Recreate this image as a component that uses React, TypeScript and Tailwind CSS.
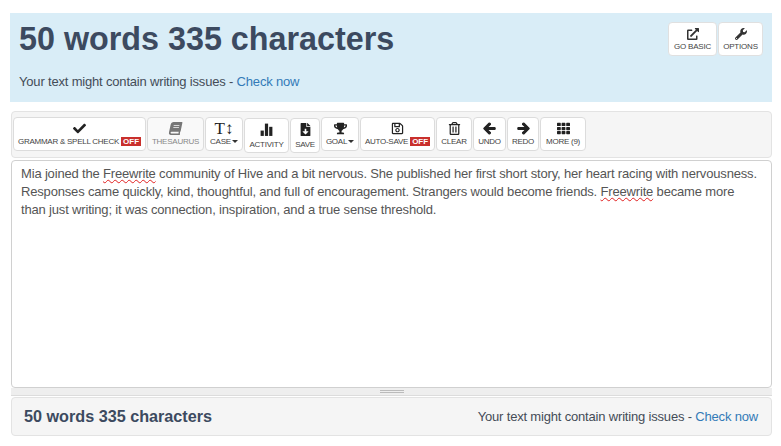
import { FaCheck, FaBook, FaTrophy, FaRegSave, FaRegTrashAlt, FaArrowLeft, FaArrowRight, FaTh, FaWrench, FaExternalLinkAlt, FaFileDownload } from 'react-icons/fa';
import type { ReactNode } from 'react';

function OffBadge() {
  return <span className="ml-[2px] bg-[#c9302c] px-[2px] text-[8px] leading-[9px] font-bold tracking-normal text-white">OFF</span>;
}

function ToolButton({ icon, label, width, low, muted, badge, caret }: {
  icon: ReactNode;
  label: string;
  width: string;
  low?: boolean;
  muted?: boolean;
  badge?: boolean;
  caret?: boolean;
}) {
  return (
    <div className={`${width} ${low ? 'mt-[1px] h-[35px]' : 'h-[34px]'} ${muted ? 'bg-[#f9f9f9] text-[#777]' : 'bg-white text-[#222]'} flex shrink-0 flex-col items-center rounded-[4px] border border-[#dcdcdc] pt-[3px]`}>
      <div className="flex h-[15px] items-center justify-center text-[13px]">{icon}</div>
      <div className={`${low ? 'mt-[2px]' : 'mt-0'} ${muted ? 'text-[#888]' : 'text-[#444]'} flex items-center text-[8px] leading-[11px] tracking-[-0.25px] whitespace-nowrap`}>
        {label}
        {caret && <span className="ml-[1px] h-0 w-0 border-x-[3px] border-t-[3px] border-x-transparent border-t-[#333]" />}
        {badge && <OffBadge />}
      </div>
    </div>
  );
}

function BarsIcon() {
  return (
    <svg width="15" height="15" viewBox="0 0 14 14" fill="currentColor">
      <rect x="1.5" y="8" width="3" height="5" />
      <rect x="5.5" y="1.5" width="3" height="11.5" />
      <rect x="9.5" y="4.5" width="3" height="8.5" />
    </svg>
  );
}

function SmallButton({ icon, label, width }: { icon: ReactNode; label: string; width: string }) {
  return (
    <div className={`${width} flex h-[34px] flex-col items-center rounded-[4px] border border-[#e0e0e0] bg-white pt-[3px] text-[#333]`}>
      <div className="flex h-[15px] items-center text-[12px]">{icon}</div>
      <div className="mt-[1px] text-[8px] leading-[10px] tracking-[-0.2px] whitespace-nowrap text-[#444]">{label}</div>
    </div>
  );
}

export default function App() {
  return (
    <div className="h-[446px] w-[781px] overflow-hidden bg-white pt-[13px] pr-[9px] pl-[10px] font-['Liberation_Sans',Arial,sans-serif] text-[#3d4a5c]">
      <div className="flex h-[89px] justify-between bg-[#d9edf7] pr-[9px] pl-[9px]">
        <div>
          <h1 className="mt-[8px] text-[32.3px] leading-[36px] font-bold text-[#3c4a60]">50 words 335 characters</h1>
          <p className="mt-[15px] text-[13px] leading-[20px] tracking-[-0.18px] text-[#444c57]">
            Your text might contain writing issues - <span className="text-[#337ab7]">Check now</span>
          </p>
        </div>
        <div className="mt-[9px] flex gap-[1px]">
          <SmallButton width="w-[49px]" label="GO BASIC" icon={<FaExternalLinkAlt />} />
          <SmallButton width="w-[45px]" label="OPTIONS" icon={<FaWrench />} />
        </div>
      </div>

      <div className="mt-[9px] ml-[1px] flex h-[47px] gap-[1px] rounded-[4px] border border-[#e3e3e3] bg-[#f5f5f5] pt-[5px] pl-[1px]">
        <ToolButton width="w-[133px]" label="GRAMMAR & SPELL CHECK" badge icon={<FaCheck />} />
        <ToolButton width="w-[57px]" label="THESAURUS" muted icon={<FaBook className="-skew-x-12" />} />
        <ToolButton width="w-[38px]" label="CASE" caret icon={<span className="font-['Liberation_Serif',serif] text-[17px] leading-[15px]">T↕</span>} />
        <ToolButton width="w-[45px]" label="ACTIVITY" low icon={<BarsIcon />} />
        <ToolButton width="w-[30px]" label="SAVE" low icon={<FaFileDownload />} />
        <ToolButton width="w-[38px]" label="GOAL" caret icon={<FaTrophy />} />
        <ToolButton width="w-[75px]" label="AUTO-SAVE" badge icon={<FaRegSave />} />
        <ToolButton width="w-[36px]" label="CLEAR" icon={<FaRegTrashAlt />} />
        <ToolButton width="w-[33px]" label="UNDO" icon={<FaArrowLeft className="stroke-[40]" />} />
        <ToolButton width="w-[32px]" label="REDO" icon={<FaArrowRight className="stroke-[40]" />} />
        <ToolButton width="w-[46px]" label="MORE (9)" icon={<FaTh />} />
      </div>

      <div className="mt-[2px] ml-[1px] h-[228px] rounded-[4px] border border-[#d0d0d0] bg-white pt-[4px] pr-[13px] pl-[9px] text-[13px] leading-[18px] tracking-[-0.17px] text-[#555]">
        Mia joined the <span className="underline decoration-[#e02020] decoration-wavy decoration-1">Freewrite</span> community of Hive and a bit nervous. She published her first short story, her heart racing with nervousness. Responses came quickly, kind, thoughtful, and full of encouragement. Strangers would become friends. <span className="underline decoration-[#e02020] decoration-wavy decoration-1">Freewrite</span> became more than just writing; it was connection, inspiration, and a true sense threshold.
      </div>

      <div className="ml-[1px] flex h-[8px] flex-col items-center justify-center gap-[1px] border-b border-[#dcdcdc] bg-[#eeeeee]">
        <div className="h-[1px] w-[24px] bg-[#bbb]" />
        <div className="h-[1px] w-[24px] bg-[#bbb]" />
      </div>

      <div className="mt-[1px] ml-[1px] flex h-[39px] items-center justify-between rounded-[4px] border border-[#e3e3e3] bg-[#f5f5f5] pr-[13px] pl-[12px]">
        <span className="text-[16.2px] font-bold text-[#3c4a60]">50 words 335 characters</span>
        <span className="text-[13px] tracking-[-0.18px] text-[#444c57]">
          Your text might contain writing issues - <span className="text-[#337ab7]">Check now</span>
        </span>
      </div>
    </div>
  );
}
